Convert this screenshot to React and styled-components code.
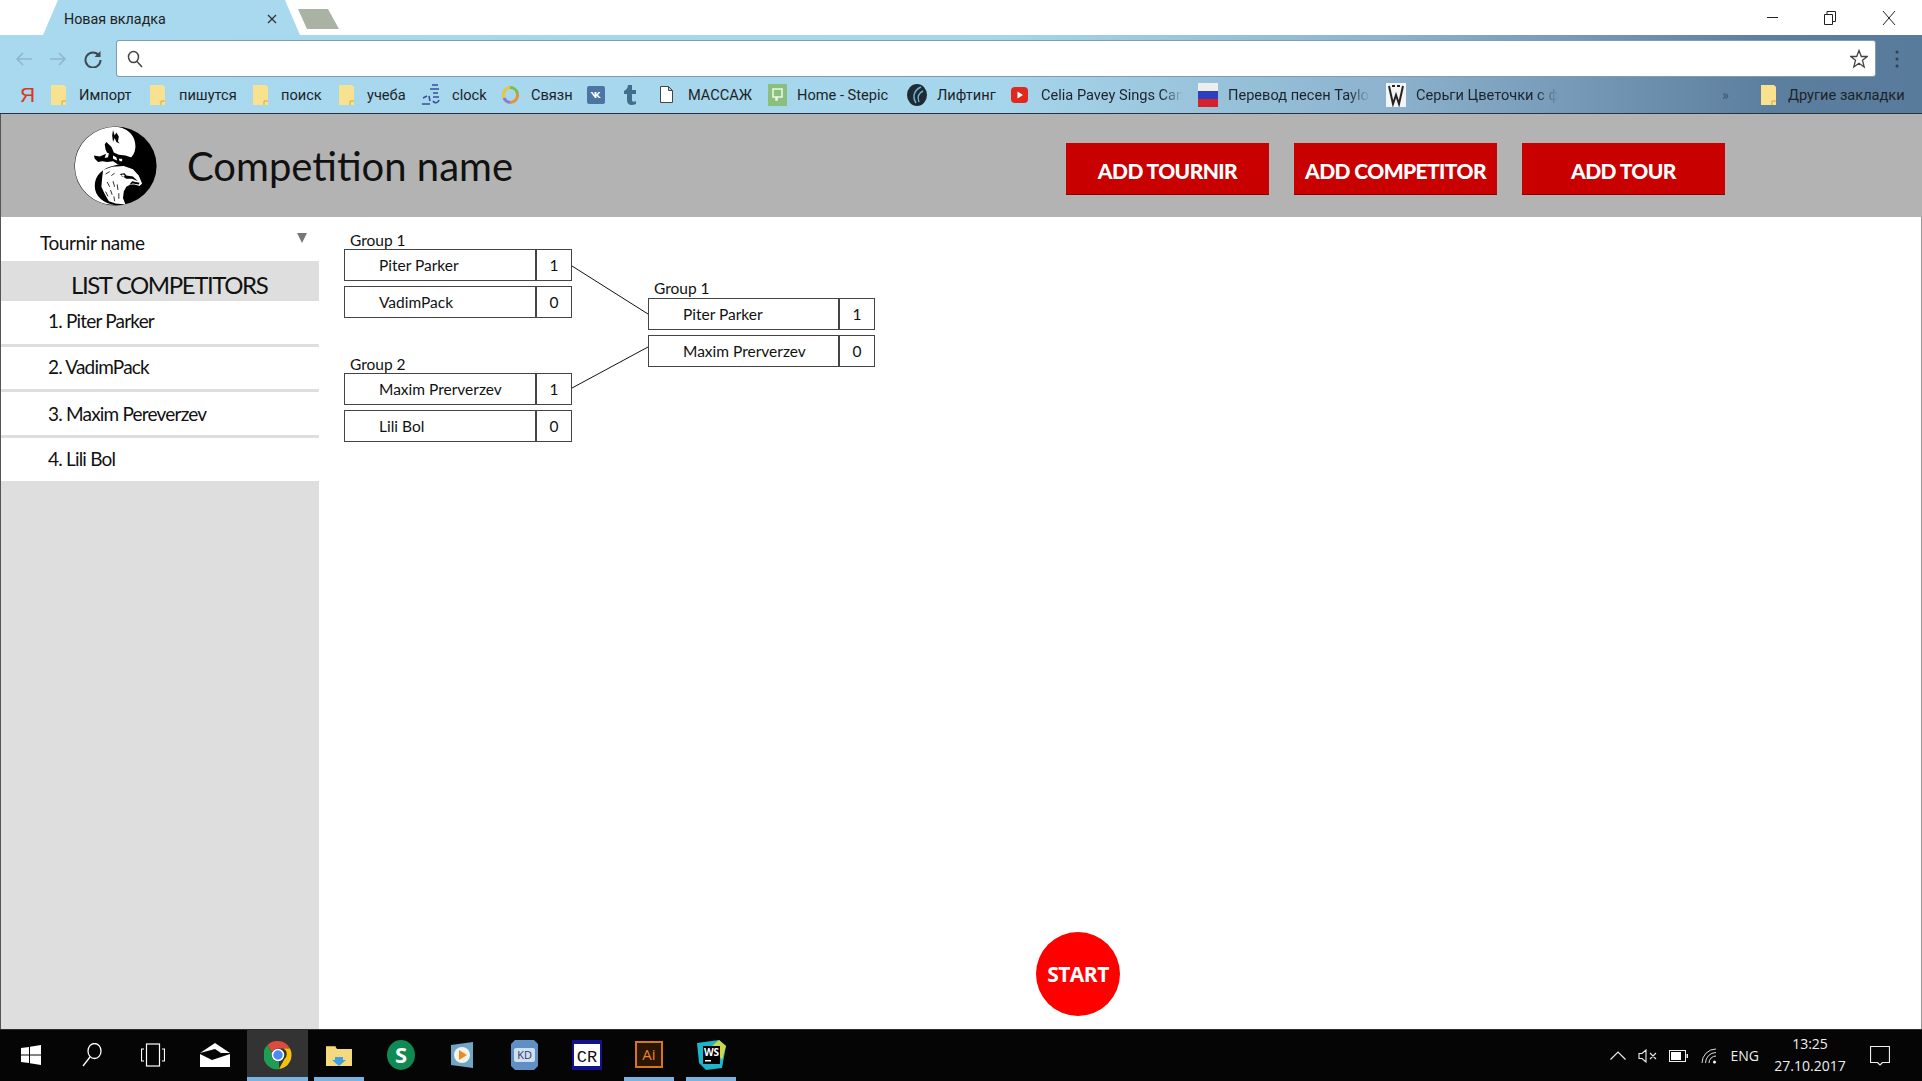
import React from 'react';
import styled, { createGlobalStyle } from 'styled-components';

const GlobalStyle = createGlobalStyle`
    html, body {
        margin: 0;
        padding: 0;
        background: #fff;
    }
    * {
        box-sizing: border-box;
    }
`;

const Page = styled.div`
    width: 1922px;
    height: 1081px;
    display: flex;
    flex-direction: column;
    overflow: hidden;
    font-family: Lato, "Noto Sans", sans-serif;
    color: #111;
`;

/* browser chrome */
const TabStrip = styled.div`
    height: 35px;
    display: flex;
    align-items: flex-end;
    padding-left: 43px;
    background: #fff;
`;

const Tab = styled.div`
    width: 257px;
    height: 35px;
    display: flex;
    align-items: center;
    justify-content: space-between;
    padding: 2px 23px 0 21px;
    background: #a8d9ee;
    clip-path: polygon(15px 0, 242px 0, 257px 100%, 0 100%);
    font: 14.300px Roboto, sans-serif;
    color: #222;
`;

const NewTab = styled.div`
    width: 41px;
    height: 20px;
    margin: 0 0 6px -2px;
    background: #a9b2a3;
    clip-path: polygon(0 0, 30px 0, 41px 100%, 9px 100%);
`;

const WindowControls = styled.div`
    margin-left: auto;
    height: 35px;
    padding-right: 26px;
    display: flex;
    align-items: center;
    gap: 46px;
    color: #222;
`;

const Toolbar = styled.div`
    background: linear-gradient(90deg, #a8d9ee 0%, #a6d6eb 52%, #8db3ce 72%, #5d7f9f 92%, #587a9b 100%);
`;

const AddressRow = styled.div`
    height: 41px;
    padding-top: 6px;
    display: flex;
`;

const NavButtons = styled.div`
    width: 117px;
    height: 35px;
    padding-left: 16px;
    display: flex;
    align-items: center;
    gap: 18px;
`;

const AddressBar = styled.div`
    width: 1758px;
    height: 35px;
    display: flex;
    align-items: center;
    justify-content: space-between;
    padding: 0 7px 0 10px;
    background: #fff;
    border-radius: 2px;
    box-shadow: 0 0 0 1px #7f9db0;
`;

const MenuDots = styled.div`
    height: 35px;
    margin-left: 20px;
    display: flex;
    align-items: center;
`;

const BookmarkBar = styled.div`
    height: 38px;
    padding-left: 20px;
    display: flex;
    align-items: center;
    border-bottom: 1px solid #26343f;
    font: 14.600px Roboto, sans-serif;
    color: #1c2429;
`;

const Bookmark = styled.div`
    width: ${(p) => p.$w}px;
    flex: none;
    display: flex;
    align-items: center;
    white-space: nowrap;
`;

const BookmarkIcon = styled.span`
    width: ${(p) => p.$w}px;
    flex: none;
    display: flex;
    align-items: center;
`;

const BookmarkText = styled.span`
    overflow: hidden;
    max-width: ${(p) => (p.$fade ? '142px' : 'none')};
    ${(p) => p.$fade && 'mask-image: linear-gradient(90deg, #000 85%, transparent 100%);'}
`;

const YandexMark = styled.span`
    width: 31px;
    flex: none;
    color: #d9361f;
    font: 21px "Liberation Sans", sans-serif;
`;

const MoreMark = styled.span`
    width: 39px;
    flex: none;
    height: 22px;
    line-height: 22px;
    color: #40586e;
`;

/* app header */
const AppHeader = styled.header`
    height: 103px;
    flex: none;
    padding: 0 197px 0 73px;
    display: flex;
    align-items: center;
    background: #b3b3b3;
    border-left: 1px solid #555;
`;

const Logo = styled.svg`
    width: 83px;
    height: 80px;
    flex: none;
`;

const Title = styled.h1`
    margin: 0 0 0 30px;
    font-size: 40px;
    font-weight: 400;
    color: #111;
`;

const HeaderActions = styled.div`
    margin: 6px 0 0 auto;
    display: flex;
    gap: 25px;
`;

const ActionButton = styled.button`
    width: 203px;
    height: 52px;
    padding: 5px 0 0;
    border: 0;
    border-bottom: 1px solid #8d0000;
    background: #c80000;
    color: #fff;
    font: 900 21px Lato, sans-serif;
    letter-spacing: -0.6px;
`;

/* main area */
const Main = styled.main`
    flex: 1;
    display: flex;
    min-height: 0;
    border-left: 1px solid #555;
    border-right: 1px solid #999;
`;

const Sidebar = styled.aside`
    width: 318px;
    flex: none;
    display: flex;
    flex-direction: column;
    background: #dedede;
`;

const TournirSelect = styled.div`
    height: 44px;
    padding: 7px 12px 0 39px;
    display: flex;
    align-items: center;
    justify-content: space-between;
    background: #fff;
    font-size: 19px;
    letter-spacing: -0.4px;
`;

const Arrow = styled.span`
    width: 0;
    height: 0;
    margin-bottom: 9px;
    border-left: 5px solid transparent;
    border-right: 5px solid transparent;
    border-top: 10px solid #777;
`;

const ListTitle = styled.div`
    height: 40px;
    padding: 7px 0 0 70px;
    display: flex;
    align-items: center;
    font-size: 24px;
    letter-spacing: -1.400px;
`;

const CompetitorList = styled.ol`
    margin: 0;
    padding: 0;
    list-style: none;
    display: flex;
    flex-direction: column;
    gap: 3px;
`;

const CompetitorItem = styled.li`
    height: ${(p) => p.$h}px;
    padding: 0 0 ${(p) => p.$pb}px 47px;
    display: flex;
    align-items: center;
    background: #fff;
    font-size: 19px;
    letter-spacing: -0.800px;
`;

const Content = styled.section`
    flex: 1;
    display: flex;
    flex-direction: column;
    background: #fff;
`;

const Bracket = styled.div`
    display: flex;
    align-items: flex-start;
    padding-left: 25px;
`;

const Round = styled.div`
    width: ${(p) => p.$w}px;
    flex: none;
    display: flex;
    flex-direction: column;
    gap: 39px;
    padding-top: ${(p) => p.$top}px;
`;

const GroupLabel = styled.div`
    height: 16px;
    padding-left: 6px;
    font-size: 15.500px;
    line-height: ${(p) => p.$lh}px;
`;

const MatchRow = styled.div`
    height: 32px;
    display: flex;
    align-items: stretch;
    border: 1px solid #444;
    font-size: 15.500px;
    & + & {
        margin-top: 5px;
    }
`;

const NameCell = styled.div`
    flex: 1;
    padding-left: 34px;
    display: flex;
    align-items: center;
`;

const ScoreCell = styled.div`
    width: 36px;
    display: flex;
    align-items: center;
    justify-content: center;
    border-left: 2px solid #444;
`;

const Connector = styled.svg`
    width: 76px;
    height: 180px;
    flex: none;
`;

const StartButton = styled.button`
    width: 84px;
    height: 84px;
    margin: auto 0 13px 717px;
    padding: 0;
    border: 0;
    border-radius: 50%;
    background: #ff0000;
    color: #fff;
    font: 700 21px "Open Sans", sans-serif;
    letter-spacing: -0.5px;
`;

/* windows taskbar */
const Taskbar = styled.footer`
    height: 52px;
    flex: none;
    display: flex;
    background: #050505;
    border-top: 1px solid #2c2c2c;
    color: #fff;
`;

const TaskCell = styled.div`
    position: relative;
    width: ${(p) => p.$w}px;
    flex: none;
    display: flex;
    align-items: center;
    justify-content: center;
    padding-bottom: 2px;
    background: ${(p) => (p.$active ? '#333' : 'transparent')};
    ${(p) =>
        p.$open &&
        `&::after {
            content: '';
            position: absolute;
            left: ${p.$active ? 0 : 6}px;
            right: ${p.$active ? 0 : 6}px;
            bottom: 0;
            height: 4px;
            background: #76b4e6;
        }`}
`;

const Tray = styled.div`
    margin-left: auto;
    padding-right: 32px;
    display: flex;
    align-items: center;
    font: 14px "Open Sans", sans-serif;
    color: #eee;
`;

const TrayItem = styled.span`
    margin-left: ${(p) => p.$ml}px;
    display: flex;
    align-items: center;
`;

const Clock = styled.div`
    width: 72px;
    margin-left: 15px;
    padding-bottom: 2px;
    text-align: center;
    font-size: 14px;
    line-height: 22px;
`;

const Folder = () => (
    <svg width="15" height="20" viewBox="0 0 15 20">
        <path d="M0 0h13l2 2v18H0z" fill="#f9e28f" />
        <path d="M11 20v-4h4" fill="none" stroke="#c9a94a" />
    </svg>
);

const bookmarks = [
    { w: 99, slot: 28, label: 'Импорт', icon: <Folder /> },
    { w: 103, slot: 29, label: 'пишутся', icon: <Folder /> },
    { w: 86, slot: 28, label: 'поиск', icon: <Folder /> },
    { w: 81, slot: 28, label: 'учеба', icon: <Folder /> },
    {
        w: 81, slot: 32, label: 'clock',
        icon: (
            <svg width="22" height="24" viewBox="0 0 22 24" fill="none" stroke="#3a4f9a" strokeWidth="1.6">
                <path d="M12 2h6M10 6h9M13 10h5M3 15l4-2M9 13l1 5M13 14h6M2 21h8M13 18c2 3 5 2 6-1" />
            </svg>
        ),
    },
    {
        w: 86, slot: 30, label: 'Связн',
        icon: (
            <svg width="19" height="20" viewBox="0 0 19 20" fill="none" strokeWidth="3">
                <path d="M3 13A7.5 7.5 0 0 1 9 2.600" stroke="#e8c63a" />
                <path d="M9 2.600A7.500 7.500 0 0 1 16.500 9" stroke="#7dbb4a" />
                <path d="M16.500 9A7.500 7.500 0 0 1 9 17.500" stroke="#e9913a" />
                <path d="M9 17.500A7.500 7.500 0 0 1 3 13" stroke="#8f7cd0" />
            </svg>
        ),
    },
    {
        w: 35, slot: 18,
        icon: (
            <svg width="18" height="18" viewBox="0 0 18 18">
                <rect width="18" height="18" rx="2" fill="#4c75a3" />
                <path d="M3.500 6h2l2 3V6h2v2.500L11.500 6h2l-2.500 3 3 3h-2.200L9.500 9.800V12H8z" fill="#fff" />
            </svg>
        ),
    },
    {
        w: 38, slot: 18,
        icon: (
            <svg width="16" height="22" viewBox="0 0 16 22">
                <path d="M6 1h4v5h4v4h-4v6c0 2 2 2 4 1v3c-5 2-9 1-9-4v-6H2V7c2-1 4-3 4-6z" fill="#3f6f8c" />
            </svg>
        ),
    },
    {
        w: 108, slot: 28, label: 'МАССАЖ',
        icon: (
            <svg width="13" height="17" viewBox="0 0 13 17" fill="#fff" stroke="#444">
                <path d="M.5.500h8l4 4v12H.5zM8.500.500v4h4" />
            </svg>
        ),
    },
    {
        w: 139, slot: 29, label: 'Home - Stepic',
        icon: (
            <svg width="19" height="22" viewBox="0 0 19 22">
                <rect width="19" height="22" fill="#8abf7c" />
                <path d="M5 5h9v8H9v3H8v-3H5z" fill="none" stroke="#eef7ea" strokeWidth="1.500" />
            </svg>
        ),
    },
    {
        w: 104, slot: 30, label: 'Лифтинг',
        icon: (
            <svg width="20" height="22" viewBox="0 0 20 22">
                <ellipse cx="10" cy="11" rx="10" ry="11" fill="#1f2b33" />
                <path d="M14 3C7 6 5 13 9 19M16 7c-4 2-6 6-4 11" fill="none" stroke="#6fb0cf" strokeWidth="1.500" />
            </svg>
        ),
    },
    {
        w: 187, slot: 30, label: 'Celia Pavey Sings Can', fade: true,
        icon: (
            <svg width="17" height="16" viewBox="0 0 17 16">
                <rect width="17" height="16" rx="4" fill="#e0281e" />
                <path d="M6.500 4.500 12 8l-5.500 3.500z" fill="#fff" />
            </svg>
        ),
    },
    {
        w: 188, slot: 30, label: 'Перевод песен Taylor', fade: true,
        icon: (
            <svg width="20" height="24" viewBox="0 0 20 24">
                <rect width="20" height="8" fill="#eee" />
                <rect y="8" width="20" height="8" fill="#2b3fc0" />
                <rect y="16" width="20" height="8" fill="#d8202a" />
            </svg>
        ),
    },
    {
        w: 336, slot: 30, label: 'Серьги Цветочки с ф', fade: true,
        icon: (
            <svg width="20" height="24" viewBox="0 0 20 24">
                <rect width="20" height="24" fill="#f4f4f4" />
                <path d="M3 3l4 18 3-9 3 9 4-18M6 3h3M11 3h3" fill="none" stroke="#222" strokeWidth="2" />
            </svg>
        ),
    },
];

const EagleLogo = () => (
    <Logo viewBox="0 0 100 100" preserveAspectRatio="none">
        <circle cx="50" cy="50" r="49.500" fill="#000" />
        <path d="M50 1C66 2 75 14 74 27C73 40 62 47 50 49C34 52 25 62 25 75C25 88 36 97 50 99A49 49 0 0 1 50 1Z" fill="#fff" />
        {/* upper bird, dark on the white lobe */}
        <path
            d="M39 20l6 6 3 7 6 3 8 1 9 3-8 8-10 0-6-4-7 1-6-1-5 1-4-4-1-4 7 1 5-2 4-2-2-5-1-6z"
            fill="#000"
        />
        <path d="M47 5l2 7 2-4 3 5-1 6 2 3-4-2-2-5-2 5-1-8z" fill="#000" />
        <path d="M39 33l3 1-1 5-4 1zM47 37l4 2 1 4-5-2zM54 41l4 0 0 3-3 0z" fill="#fff" />
        {/* lower bird, white on the black lobe */}
        <path
            d="M35 55l11-4 14-1 11 4 7 8 4 10-3 3-6-2-5 0-5 3-3 6-1 8 3 8-12-1-8-3-5-9-4-9 1-12z"
            fill="#fff"
        />
        <path d="M55 60l6-1 2 3 8 1 6 6-7-3-7 0-4-3zM57 62a2 1.500 0 1 0 4 0 2 1.500 0 1 0-4 0z" fill="#000" />
        <path d="M70 69l9 2-1 2-7-1-4 1z" fill="#000" />
        <path
            d="M38 60l5-3M45 62l4-3M40 70l3 6M47 69l2 7M52 73l1 7M44 80l2 6M38 82l3 6M54 84l0 7M48 88l1 6"
            stroke="#000"
            fill="none"
            strokeWidth="1"
        />
    </Logo>
);

const ChromeIcon = () => (
    <svg width="28" height="30" viewBox="0 0 28 30">
        <path d="M14 1a13.500 14 0 0 1 12 7.500H14a6.500 6.500 0 0 0-6 4L3.500 5A13.500 14 0 0 1 14 1z" fill="#dd4b3e" />
        <path d="M26 8.500a13.500 14 0 0 1-11 20.500l5.500-10a6.500 6.500 0 0 0-1-10.500z" fill="#f4c20d" />
        <path d="M15 29A13.500 14 0 0 1 3.500 5L8 13a6.500 6.500 0 0 0 7 8.500z" fill="#1e9e55" />
        <circle cx="14" cy="15" r="5.500" fill="#4a8bf0" stroke="#fff" strokeWidth="1.500" />
    </svg>
);

const tasks = [
    {
        w: 61,
        icon: (
            <svg width="20" height="20" viewBox="0 0 20 20" fill="#fff">
                <path d="M0 3l8-1v7.500H0zM9 1.800 20 0v9.500H9zM0 10.500h8V18l-8-1zM9 10.500h11V20L9 18.300z" />
            </svg>
        ),
    },
    {
        w: 61,
        icon: (
            <svg width="20" height="24" viewBox="0 0 20 24" fill="none" stroke="#fff" strokeWidth="1.300">
                <ellipse cx="12.500" cy="8" rx="6.500" ry="7.500" />
                <path d="M8 14 1 23" />
            </svg>
        ),
    },
    {
        w: 61,
        icon: (
            <svg width="24" height="24" viewBox="0 0 24 24" fill="none" stroke="#fff" strokeWidth="1.200">
                <rect x="5.500" y="1" width="13" height="22" />
                <path d="M3 6H.5v12H3M21 6h2.500v12H21" />
            </svg>
        ),
    },
    {
        w: 64,
        icon: (
            <svg width="30" height="24" viewBox="0 0 30 24" fill="#fff">
                <path d="M15 0l15 10-9 0-6-4-15 4zM0 11l12 6 18-6v13H0z" />
            </svg>
        ),
    },
    { w: 61, active: true, open: true, icon: <ChromeIcon /> },
    {
        w: 62,
        open: true,
        icon: (
            <svg width="28" height="24" viewBox="0 0 28 24">
                <path d="M1 3h9l2 3h15v17H1z" fill="#f5d97e" />
                <path d="M1 3h9l1 1H1z" fill="#c9a94a" />
                <path d="M10 14h8v3h3l-7 6-7-6h3z" fill="#3f9fe0" />
            </svg>
        ),
    },
    {
        w: 61,
        icon: (
            <svg width="28" height="30" viewBox="0 0 28 30">
                <ellipse cx="14" cy="15" rx="14" ry="15" fill="#0f8a54" />
                <text x="14" y="23" textAnchor="middle" fontSize="22" fontWeight="700" fontFamily="Open Sans" fill="#fff">S</text>
            </svg>
        ),
    },
    {
        w: 61,
        icon: (
            <svg width="24" height="26" viewBox="0 0 24 26">
                <path d="M1 3 23 0v26L1 23z" fill="#6fa6c4" />
                <circle cx="12" cy="13" r="8" fill="#f4f4ef" />
                <path d="M9 8l8 5-8 5z" fill="#ef8a1d" />
            </svg>
        ),
    },
    {
        w: 64,
        icon: (
            <svg width="27" height="30" viewBox="0 0 27 30">
                <path d="M4 0h19l4 4v22l-4 4H4l-4-4V4z" fill="#5f8fc4" />
                <rect x="3" y="8" width="21" height="14" rx="2" fill="#cfe0f1" />
                <text x="13.500" y="19" textAnchor="middle" fontSize="11" fontFamily="Open Sans" fill="#336">KD</text>
            </svg>
        ),
    },
    {
        w: 62,
        icon: (
            <svg width="30" height="30" viewBox="0 0 30 30">
                <rect width="30" height="30" fill="#12128c" />
                <rect x="2" y="4" width="26" height="22" fill="#fff" />
                <text x="15" y="22" textAnchor="middle" fontSize="17" fontFamily="Liberation Mono" fill="#111">CR</text>
            </svg>
        ),
    },
    {
        w: 62,
        open: true,
        icon: (
            <svg width="28" height="27" viewBox="0 0 28 27">
                <rect x="1" y="1" width="26" height="25" fill="#2a1404" stroke="#d97516" strokeWidth="2" />
                <text x="14" y="19" textAnchor="middle" fontSize="15" fontFamily="Open Sans" fill="#e8871e">Ai</text>
            </svg>
        ),
    },
    {
        w: 62,
        open: true,
        icon: (
            <svg width="29" height="30" viewBox="0 0 29 30">
                <path d="M0 3 22 0l7 6-4 22-16 2-7-7z" fill="#1fb5c9" />
                <path d="M22 0l7 6-4 14-10-14z" fill="#c9d94a" />
                <rect x="6" y="6" width="17" height="18" fill="#000" />
                <text x="14.500" y="16" textAnchor="middle" fontSize="10" fontWeight="700" fontFamily="Open Sans" fill="#fff">WS</text>
                <rect x="8" y="20" width="6" height="1.500" fill="#fff" />
            </svg>
        ),
    },
];

const rounds = [
    {
        top: 16,
        w: 228,
        labelLh: 15,
        groups: [
            { label: 'Group 1', rows: [['Piter Parker', 1], ['VadimPack', 0]] },
            { label: 'Group 2', rows: [['Maxim Prerverzev', 1], ['Lili Bol', 0]] },
        ],
    },
    {
        top: 65,
        w: 227,
        labelLh: 12,
        groups: [{ label: 'Group 1', rows: [['Piter Parker', 1], ['Maxim Prerverzev', 0]] }],
    },
];

const competitors = [
    { name: '1. Piter Parker', h: 43, pb: 4 },
    { name: '2. VadimPack', h: 42, pb: 4 },
    { name: '3. Maxim Pereverzev', h: 43, pb: 0 },
    { name: '4. Lili Bol', h: 43, pb: 2 },
];

const renderRound = (round) => (
    <Round key={round.top} $top={round.top} $w={round.w}>
        {round.groups.map((group) => (
            <div key={group.label}>
                <GroupLabel $lh={round.labelLh}>{group.label}</GroupLabel>
                {group.rows.map(([name, score]) => (
                    <MatchRow key={name}>
                        <NameCell>{name}</NameCell>
                        <ScoreCell>{score}</ScoreCell>
                    </MatchRow>
                ))}
            </div>
        ))}
    </Round>
);

const App = () => {
    return (
        <Page>
            <GlobalStyle />
            <TabStrip>
                <Tab>
                    Новая вкладка
                    <svg width="10" height="10" viewBox="0 0 10 10" stroke="#333" strokeWidth="1.300">
                        <path d="M1 1l8 8M9 1l-8 8" />
                    </svg>
                </Tab>
                <NewTab />
                <WindowControls>
                    <svg width="11" height="11" viewBox="0 0 11 11" stroke="#222"><path d="M0 5.500h11" /></svg>
                    <svg width="12" height="14" viewBox="0 0 12 14" fill="none" stroke="#222">
                        <path d="M.5 3.500h8v10h-8zM3 3.500V.5h8.500v10H8.500" />
                    </svg>
                    <svg width="14" height="14" viewBox="0 0 14 14" stroke="#222"><path d="M1 0l12 14M13 0 1 14" /></svg>
                </WindowControls>
            </TabStrip>
            <Toolbar>
                <AddressRow>
                    <NavButtons>
                        <svg width="16" height="14" viewBox="0 0 16 14" fill="none" stroke="#8fb6c9" strokeWidth="1.500">
                            <path d="M16 7H1M7 1 1 7l6 6" />
                        </svg>
                        <svg width="16" height="14" viewBox="0 0 16 14" fill="none" stroke="#8fb6c9" strokeWidth="1.500">
                            <path d="M0 7h15M9 1l6 6-6 6" />
                        </svg>
                        <svg width="18" height="18" viewBox="0 0 18 18" fill="none" stroke="#3d4a52" strokeWidth="2">
                            <path d="M15 5.500A7.500 7.500 0 1 0 16.500 10" />
                            <path d="M16.500 1v6h-6" fill="#3d4a52" stroke="none" />
                        </svg>
                    </NavButtons>
                    <AddressBar>
                        <svg width="16" height="18" viewBox="0 0 16 18" fill="none" stroke="#444" strokeWidth="1.500">
                            <ellipse cx="6.500" cy="7" rx="5" ry="5.500" />
                            <path d="M10 11.500 15 17" />
                        </svg>
                        <svg width="18" height="20" viewBox="0 0 18 20" fill="none" stroke="#444" strokeWidth="1.300">
                            <path d="M9 1.500 11.300 7.500H17.200L12.500 11.300 14.200 18 9 14.200 3.800 18 5.500 11.300.8 7.500H6.700z" />
                        </svg>
                    </AddressBar>
                    <MenuDots>
                        <svg width="4" height="18" viewBox="0 0 4 18" fill="#2f4050">
                            <circle cx="2" cy="2" r="1.500" /><circle cx="2" cy="9" r="1.500" /><circle cx="2" cy="16" r="1.500" />
                        </svg>
                    </MenuDots>
                </AddressRow>
                <BookmarkBar>
                    <YandexMark>Я</YandexMark>
                    {bookmarks.map((b) => (
                        <Bookmark key={b.w + '-' + b.slot} $w={b.w}>
                            <BookmarkIcon $w={b.slot}>{b.icon}</BookmarkIcon>
                            {b.label && <BookmarkText $fade={b.fade}>{b.label}</BookmarkText>}
                        </Bookmark>
                    ))}
                    <MoreMark>»</MoreMark>
                    <Bookmark $w={150}>
                        <BookmarkIcon $w={27}><Folder /></BookmarkIcon>
                        <BookmarkText>Другие закладки</BookmarkText>
                    </Bookmark>
                </BookmarkBar>
            </Toolbar>
            <AppHeader>
                <EagleLogo />
                <Title>Competition name</Title>
                <HeaderActions>
                    <ActionButton>ADD TOURNIR</ActionButton>
                    <ActionButton>ADD COMPETITOR</ActionButton>
                    <ActionButton>ADD TOUR</ActionButton>
                </HeaderActions>
            </AppHeader>
            <Main>
                <Sidebar>
                    <TournirSelect>
                        Tournir name
                        <Arrow />
                    </TournirSelect>
                    <ListTitle>LIST COMPETITORS</ListTitle>
                    <CompetitorList>
                        {competitors.map((c) => (
                            <CompetitorItem key={c.name} $h={c.h} $pb={c.pb}>{c.name}</CompetitorItem>
                        ))}
                    </CompetitorList>
                </Sidebar>
                <Content>
                    <Bracket>
                        {renderRound(rounds[0])}
                        <Connector viewBox="0 0 76 180" stroke="#111" fill="none">
                            <path d="M0 49 76 97M0 171 76 130" />
                        </Connector>
                        {renderRound(rounds[1])}
                    </Bracket>
                    <StartButton>START</StartButton>
                </Content>
            </Main>
            <Taskbar>
                {tasks.map((t, i) => (
                    <TaskCell key={i} $w={t.w} $active={t.active} $open={t.open}>{t.icon}</TaskCell>
                ))}
                <Tray>
                    <TrayItem $ml={0}>
                        <svg width="16" height="9" viewBox="0 0 16 9" fill="none" stroke="#eee" strokeWidth="1.200"><path d="M.5 8.500 8 1l7.500 7.500" /></svg>
                    </TrayItem>
                    <TrayItem $ml={12}>
                        <svg width="19" height="14" viewBox="0 0 19 14" fill="none" stroke="#eee" strokeWidth="1.100">
                            <path d="M1 4.500h3L8 1v12L4 9.500H1zM12 4l6 6M18 4l-6 6" />
                        </svg>
                    </TrayItem>
                    <TrayItem $ml={12}>
                        <svg width="19" height="12" viewBox="0 0 19 12">
                            <rect x=".5" y=".5" width="16" height="11" fill="none" stroke="#eee" />
                            <rect x="2" y="2" width="10" height="8" fill="#fff" />
                            <rect x="17.500" y="4" width="1.500" height="4" fill="#eee" />
                        </svg>
                    </TrayItem>
                    <TrayItem $ml={13}>
                        <svg width="16" height="16" viewBox="0 0 16 16" fill="none" stroke="#ddd">
                            <path d="M1 15A14 14 0 0 1 15 1M4.500 15A10.500 10.500 0 0 1 15 4.500M8 15A7 7 0 0 1 15 8" />
                            <circle cx="13.500" cy="14" r="1.500" fill="#fff" stroke="none" />
                        </svg>
                    </TrayItem>
                    <TrayItem $ml={14}>ENG</TrayItem>
                    <Clock>13:25<br />27.10.2017</Clock>
                    <TrayItem $ml={24}>
                        <svg width="20" height="20" viewBox="0 0 20 20" fill="none" stroke="#eee" strokeWidth="1.200">
                            <path d="M.5.500h19v16h-7L10 19l-2.500-2.500h-7z" />
                        </svg>
                    </TrayItem>
                </Tray>
            </Taskbar>
        </Page>
    );
};

export default App;
